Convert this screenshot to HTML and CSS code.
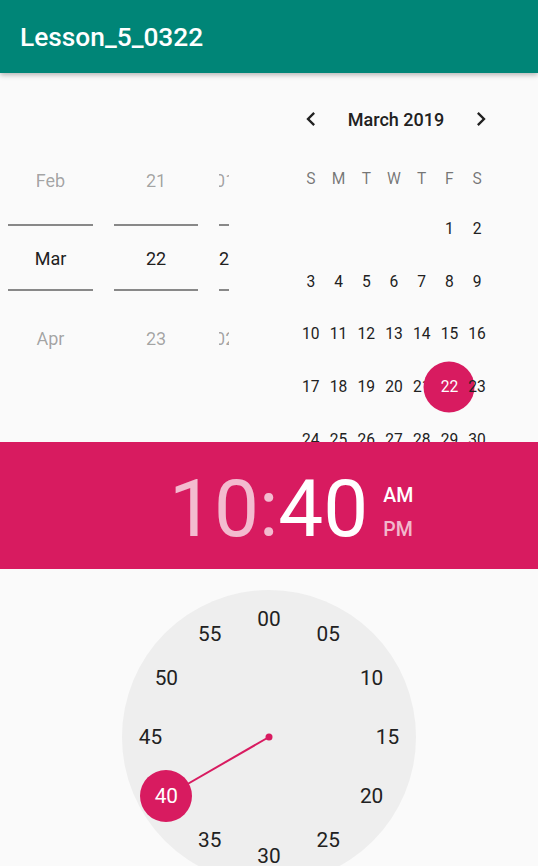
FILE: index.html
```html
<!DOCTYPE html>
<html>
<head>
<meta charset="utf-8">
<link rel="stylesheet" href="styles.css">
</head>
<body>
<div class="appbar"><span class="title">Lesson_5_0322</span></div>

<div class="pickers">
  <div class="spinner">
    <div class="col">
      <div class="item prev">Feb</div>
      <div class="item cur">Mar</div>
      <div class="item next">Apr</div>
    </div>
    <div class="col day">
      <div class="item prev">21</div>
      <div class="item cur">22</div>
      <div class="item next">23</div>
    </div>
    <div class="col year">
      <div class="item prev">2018</div>
      <div class="item cur">2019</div>
      <div class="item next">2020</div>
    </div>
  </div>

  <div class="calendar">
    <div class="cal-head">
      <span class="chev"><svg width="28" height="28" viewBox="0 0 24 24"><path d="M15.41 7.41L14 6l-6 6 6 6 1.41-1.41L10.83 12z" fill="#212121"/></svg></span>
      <span class="month">March 2019</span>
      <span class="chev"><svg width="28" height="28" viewBox="0 0 24 24"><path d="M8.59 16.59L10 18l6-6-6-6-1.41 1.41L13.17 12z" fill="#212121"/></svg></span>
    </div>
    <div class="week"><span>S</span><span>M</span><span>T</span><span>W</span><span>T</span><span>F</span><span>S</span></div>
    <div class="days">
      <div class="d"></div><div class="d"></div><div class="d"></div><div class="d"></div><div class="d"></div><div class="d"><span>1</span></div><div class="d"><span>2</span></div>
      <div class="d"><span>3</span></div><div class="d"><span>4</span></div><div class="d"><span>5</span></div><div class="d"><span>6</span></div><div class="d"><span>7</span></div><div class="d"><span>8</span></div><div class="d"><span>9</span></div>
      <div class="d"><span>10</span></div><div class="d"><span>11</span></div><div class="d"><span>12</span></div><div class="d"><span>13</span></div><div class="d"><span>14</span></div><div class="d"><span>15</span></div><div class="d"><span>16</span></div>
      <div class="d"><span>17</span></div><div class="d"><span>18</span></div><div class="d"><span>19</span></div><div class="d"><span>20</span></div><div class="d"><span>21</span></div><div class="d sel"><span>22</span></div><div class="d"><span>23</span></div>
      <div class="d"><span>24</span></div><div class="d"><span>25</span></div><div class="d"><span>26</span></div><div class="d"><span>27</span></div><div class="d"><span>28</span></div><div class="d"><span>29</span></div><div class="d"><span>30</span></div>
      <div class="d"><span>31</span></div>
    </div>
  </div>
</div>

<div class="time-header">
  <div class="time"><span class="dim">10</span><span class="dim">:</span><span>40</span></div>
  <div class="ampm"><span>AM</span><span class="dim">PM</span></div>
</div>

<div class="clock-area">
  <div class="clock">
    <svg class="hand" width="294" height="294" viewBox="0 0 294 294">
      <line x1="147" y1="147" x2="44.38" y2="206.25" stroke="#D81B60" stroke-width="2"/>
      <circle cx="147" cy="147" r="3.5" fill="#D81B60"/>
    </svg>
    <span class="num m0">00</span>
    <span class="num m5">05</span>
    <span class="num m10">10</span>
    <span class="num m15">15</span>
    <span class="num m20">20</span>
    <span class="num m25">25</span>
    <span class="num m30">30</span>
    <span class="num m35">35</span>
    <span class="num m40 sel">40</span>
    <span class="num m45">45</span>
    <span class="num m50">50</span>
    <span class="num m55">55</span>
  </div>
</div>
</body>
</html>
```
FILE: styles.css
```css
html, body {
  margin: 0;
  padding: 0;
}
body {
  background: #fafafa;
  font-family: Roboto, "Noto Sans", sans-serif;
  width: 538px;
  height: 866px;
  overflow: hidden;
}

.appbar {
  height: 73px;
  background: #008577;
  display: flex;
  align-items: center;
  padding-left: 20px;
  box-shadow: 0 2px 5px rgba(0, 0, 0, 0.28);
  position: relative;
  z-index: 2;
}
.title {
  color: #fff;
  font-size: 26.3px;
  font-weight: 500;
}

.pickers {
  display: flex;
  height: 369px;
  overflow: hidden;
}

.spinner {
  display: flex;
  gap: 21px;
  padding-left: 8px;
  flex: none;
}
.col {
  width: 85px;
  padding-top: 68px;
  display: flex;
  flex-direction: column;
}
.col.day {
  width: 84px;
}
.col.year {
  width: 10px;
  overflow: hidden;
  white-space: nowrap;
}
.item {
  text-align: center;
  font-size: 18px;
  color: rgba(0, 0, 0, 0.36);
}
.item.prev {
  height: 79px;
  line-height: 79px;
}
.item.cur {
  margin-top: 4px;
  border-top: 2px solid #888;
  border-bottom: 2px solid #888;
  padding-top: 3px;
  height: 60px;
  line-height: 60px;
  color: #212121;
}
.item.next {
  margin-top: 7.5px;
  height: 79px;
  line-height: 79px;
}
.year .item {
  text-align: left;
}
.year .item.prev,
.year .item.next {
  text-indent: -14px;
}

.calendar {
  margin-left: 68px;
  width: 194px;
  padding-top: 26px;
  flex: none;
}
.cal-head {
  display: flex;
  justify-content: space-between;
  align-items: center;
  height: 40px;
  margin-right: -4px;
}
.chev {
  width: 28px;
  height: 28px;
  display: flex;
  align-items: center;
  justify-content: center;
}
.month {
  font-size: 18px;
  font-weight: 500;
  color: #212121;
}
.week {
  display: grid;
  grid-template-columns: repeat(7, 1fr);
  margin-top: 16px;
  height: 48px;
  line-height: 48px;
  text-align: center;
  font-size: 15.6px;
  color: rgba(0, 0, 0, 0.54);
}
.days {
  display: grid;
  grid-template-columns: repeat(7, 1fr);
  grid-auto-rows: 52.6px;
}
.d {
  position: relative;
  display: flex;
  align-items: center;
  justify-content: center;
  font-size: 15.6px;
  color: #212121;
}
.d span {
  position: relative;
}
.d.sel {
  color: #fff;
}
.d.sel::before {
  content: "";
  position: absolute;
  width: 51px;
  height: 51px;
  border-radius: 50%;
  background: #d81b60;
  left: 50%;
  top: 50%;
  transform: translate(-50%, -50%);
}

.time-header {
  height: 127px;
  background: #d81b60;
  display: flex;
  align-items: flex-start;
  padding-left: 169px;
  position: relative;
  z-index: 1;
}
.time {
  font-size: 80px;
  line-height: 80px;
  margin-top: 27px;
  color: #fff;
  white-space: nowrap;
}
.dim {
  color: rgba(255, 255, 255, 0.7);
}
.ampm {
  margin-left: 15px;
  margin-top: 37px;
  display: flex;
  flex-direction: column;
  font-size: 19.5px;
  font-weight: 500;
  line-height: 34px;
  color: #fff;
}

.clock-area {
  padding-top: 21px;
  display: flex;
  justify-content: center;
}
.clock {
  width: 294px;
  height: 294px;
  border-radius: 50%;
  background: #eeeeee;
  position: relative;
  flex: none;
}
.hand {
  position: absolute;
  left: 0;
  top: 0;
}
.num {
  position: absolute;
  width: 52px;
  height: 52px;
  margin: -26px 0 0 -26px;
  display: flex;
  align-items: center;
  justify-content: center;
  font-size: 20.8px;
  color: #212121;
  border-radius: 50%;
}
.num.sel {
  background: #d81b60;
  color: #fff;
}
.m0  { left: 147px;    top: 28.5px; }
.m5  { left: 206.25px; top: 44.38px; }
.m10 { left: 249.62px; top: 87.75px; }
.m15 { left: 265.5px;  top: 147px; }
.m20 { left: 249.62px; top: 206.25px; }
.m25 { left: 206.25px; top: 249.62px; }
.m30 { left: 147px;    top: 265.5px; }
.m35 { left: 87.75px;  top: 249.62px; }
.m40 { left: 44.38px;  top: 206.25px; }
.m45 { left: 28.5px;   top: 147px; }
.m50 { left: 44.38px;  top: 87.75px; }
.m55 { left: 87.75px;  top: 44.38px; }
```
